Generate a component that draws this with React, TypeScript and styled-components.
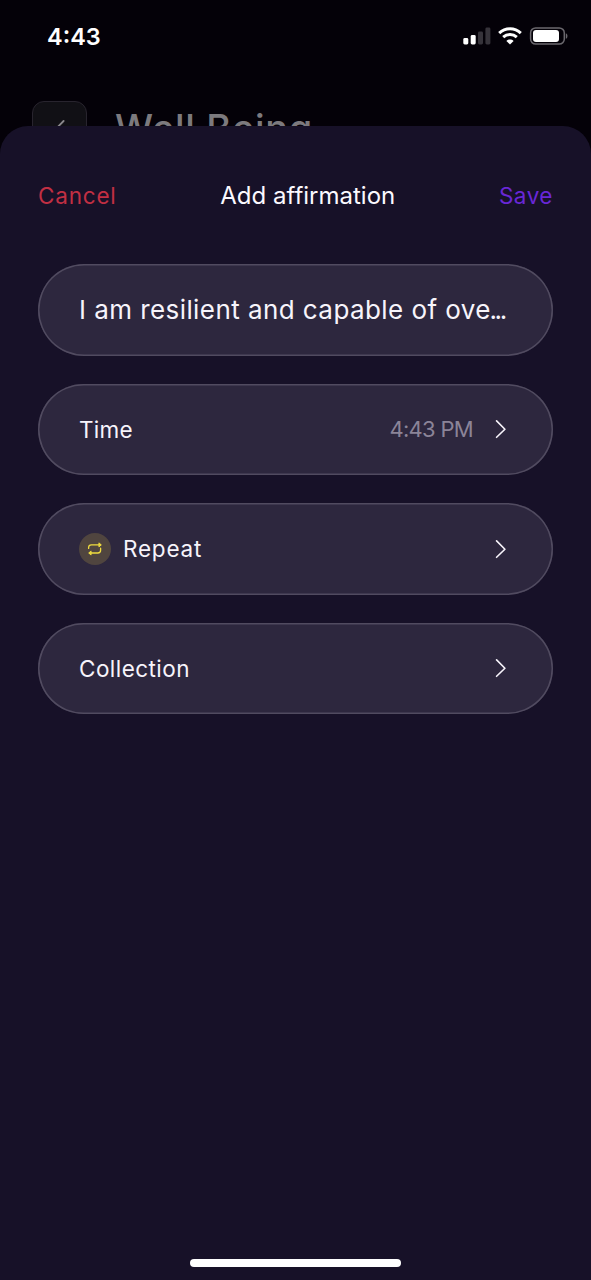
import React from 'react';
import styled, { createGlobalStyle } from 'styled-components';

const GlobalStyle = createGlobalStyle`
  *, *::before, *::after { box-sizing: border-box; }
  html, body { margin: 0; padding: 0; background: #040108; }
  body { font-family: Inter, "Liberation Sans", sans-serif; overflow: hidden; }
  button, input { font-family: inherit; border: 0; padding: 0; margin: 0; background: none; }
`;

const Screen = styled.div`
  display: flex;
  flex-direction: column;
  width: 591px;
  height: 1280px;
  overflow: hidden;
  background: #040108;
`;

const StatusBar = styled.header`
  display: flex;
  justify-content: space-between;
  align-items: center;
  flex: none;
  height: 72px;
  padding: 0 23px 0 47px;
`;

const Label = styled.span<{ $size: number; $color?: string; $weight?: number; $spacing?: number }>`
  font-size: ${(p) => p.$size}px;
  font-weight: ${(p) => p.$weight ?? 400};
  line-height: 1.3;
  color: ${(p) => p.$color ?? '#f7f4fb'};
  letter-spacing: ${(p) => p.$spacing ?? 0}px;
  white-space: nowrap;
`;

const Clock = styled(Label)`
  padding-top: 2px;
`;

const Dots = styled.span`
  margin-left: -1.5px;
  letter-spacing: -2.3px;
`;

const StatusIcons = styled.div`
  display: flex;
  align-items: center;
  gap: 7px;
`;

const Backdrop = styled.div`
  display: flex;
  align-items: flex-start;
  flex: none;
  height: 54px;
  padding: 29px 0 0 32px;
  gap: 28px;
  overflow: hidden;
`;

const BackButton = styled.div`
  display: flex;
  align-items: center;
  justify-content: center;
  width: 55px;
  height: 55px;
  border: 1.5px solid #28242e;
  border-radius: 12px;
  background: #111015;
`;

const PageTitle = styled.h1`
  margin: 4px 0 0;
  font-size: 38px;
  font-weight: 500;
  line-height: 46px;
  letter-spacing: 0.7px;
  color: #7c7a7e;
  white-space: nowrap;
`;

const Sheet = styled.main`
  display: flex;
  flex-direction: column;
  flex: 1;
  padding: 48px 38px 13px;
  border-radius: 28px 28px 0 0;
  background: #171128;
`;

const SheetHeader = styled.div`
  display: flex;
  justify-content: space-between;
  align-items: center;
  height: 44px;
  margin-bottom: 46.3px;
`;

const Fields = styled.div`
  display: flex;
  flex-direction: column;
  gap: 28.2px;
`;

const Field = styled.div`
  display: flex;
  align-items: center;
  height: 91.3px;
  padding: 0 47px 0 41px;
  border-radius: 46px;
  background: #2d273e;
  box-shadow: inset 0 0 0 1.5px #514b60;
`;

const Trailing = styled.div`
  display: flex;
  align-items: center;
  gap: 21px;
  margin-left: auto;
`;

const RepeatBadge = styled.span`
  display: flex;
  align-items: center;
  justify-content: center;
  width: 32px;
  height: 32px;
  margin-right: 12px;
  border-radius: 50%;
  background: #50453f;
`;

const HomeIndicator = styled.div`
  width: 211px;
  height: 8px;
  margin: auto auto 0;
  border-radius: 4px;
  background: #fff;
`;

const Signal = () => (
  <svg width="28" height="18" viewBox="0 0 28 18">
    <rect x="0.3" y="11" width="5" height="6.5" rx="1.4" fill="#fff" />
    <rect x="7.7" y="8" width="5" height="9.5" rx="1.4" fill="#fff" />
    <rect x="15" y="4.5" width="5" height="13" rx="1.4" fill="#36333a" />
    <rect x="22.4" y="0.5" width="5" height="17" rx="1.4" fill="#36333a" />
  </svg>
);

const Wifi = () => (
  <svg width="24" height="18" viewBox="0 0 24 18" fill="none" stroke="#fff" strokeWidth="3">
    <path d="M1.2 6.1C7.2 0.4 16.8 0.4 22.8 6.1" />
    <path d="M5.2 10.2C9 6.7 15 6.7 18.8 10.2" />
    <path d="M12 17.6 8.4 13.9C10.4 12 13.6 12 15.6 13.9Z" fill="#fff" stroke="none" />
  </svg>
);

const Battery = () => (
  <svg width="39" height="18" viewBox="0 0 39 18">
    <rect x="1.6" y="0.9" width="33.7" height="16.2" rx="5" fill="none" stroke="#6b686e" strokeWidth="1.5" />
    <rect x="4" y="3" width="26" height="12" rx="3" fill="#fff" />
    <path d="M36.8 6.2C39 7 39 11 36.8 11.8Z" fill="#6b686e" />
  </svg>
);

const Chevron = () => (
  <svg width="12" height="20" viewBox="0 0 12 20" fill="none" stroke="#f7f4fb" strokeWidth="1.6" strokeLinecap="round" strokeLinejoin="round">
    <path d="M2.6 1.9 10.9 10.2 2.6 18.3" />
  </svg>
);

const RepeatIcon = () => (
  <svg width="16" height="14" viewBox="0 0 16 14" fill="none" stroke="#eedb3f" strokeWidth="1.3" strokeLinecap="round" strokeLinejoin="round">
    <path d="M1.6 6.4V5.6Q1.6 2.9 4.4 2.9H13.5" />
    <path d="M12.2 1.1 14.3 2.9 12.2 4.7Z" fill="#eedb3f" strokeWidth="0.9" />
    <path d="M13.6 6.2V8.2Q13.6 11 10.8 11H2.5" />
    <path d="M3.8 9.2 1.7 11 3.8 12.8Z" fill="#eedb3f" strokeWidth="0.9" />
  </svg>
);

export default function App() {
  return (
    <>
      <GlobalStyle />
      <Screen>
        <StatusBar>
          <Clock $size={23.5} $weight={600} $color="#fff">4:43</Clock>
          <StatusIcons>
            <Signal />
            <Wifi />
            <Battery />
          </StatusIcons>
        </StatusBar>
        <Backdrop>
          <BackButton>
            <svg width="12" height="20" viewBox="0 0 12 20" fill="none" stroke="#8a888c" strokeWidth="1.8" strokeLinecap="round">
              <path d="M9.6 2 1.8 10 9.6 18" />
            </svg>
          </BackButton>
          <PageTitle>Well Being</PageTitle>
        </Backdrop>
        <Sheet>
          <SheetHeader>
            <Label as="button" $size={22.5} $color="#c12f43" $spacing={0.8}>Cancel</Label>
            <Label $size={24} $color="#fbf9ff">Add affirmation</Label>
            <Label as="button" $size={22.5} $color="#6927d6" $spacing={0.5}>Save</Label>
          </SheetHeader>
          <Fields>
            <Field>
              <Label $size={26} $spacing={0.43}>I am resilient and capable of ove<Dots>...</Dots></Label>
            </Field>
            <Field>
              <Label $size={22.5} $spacing={0.3}>Time</Label>
              <Trailing>
                <Label $size={22} $color="#8b8498" $spacing={-0.7}>4:43 PM</Label>
                <Chevron />
              </Trailing>
            </Field>
            <Field>
              <RepeatBadge><RepeatIcon /></RepeatBadge>
              <Label $size={22.5} $spacing={0.8}>Repeat</Label>
              <Trailing><Chevron /></Trailing>
            </Field>
            <Field>
              <Label $size={22.5} $spacing={0.45}>Collection</Label>
              <Trailing><Chevron /></Trailing>
            </Field>
          </Fields>
          <HomeIndicator />
        </Sheet>
      </Screen>
    </>
  );
}
